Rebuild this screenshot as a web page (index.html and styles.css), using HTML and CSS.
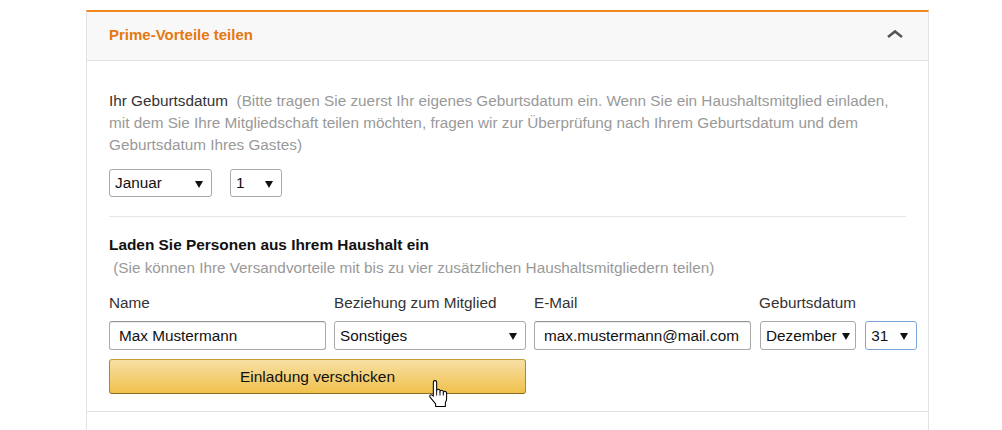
FILE: index.html
```html
<!DOCTYPE html>
<html>

<head>
    <link rel="stylesheet" href="styles.css">
</head>

<body>
    <div class="panel">
        <div class="panel-head">
            <span class="panel-title">Prime-Vorteile teilen</span>
            <svg class="chevron" width="18" height="10" viewBox="0 0 18 10">
                <path d="M2 8 L9 2.5 L16 8" fill="none" stroke="#555" stroke-width="2.6" />
            </svg>
        </div>
        <div class="panel-body">
            <p class="intro">
                <span class="intro-label">Ihr Geburtsdatum</span>&nbsp; (Bitte tragen Sie zuerst Ihr eigenes Geburtsdatum ein. Wenn Sie ein Haushaltsmitglied einladen, mit dem Sie Ihre Mitgliedschaft teilen möchten, fragen wir zur Überprüfung nach Ihrem Geburtsdatum und dem Geburtsdatum Ihres Gastes)
            </p>
            <div class="date-row">
                <div class="select w-month"><span>Januar</span></div>
                <div class="select w-day"><span>1</span></div>
            </div>
            <hr class="divider">
            <h3 class="invite-title">Laden Sie Personen aus Ihrem Haushalt ein</h3>
            <p class="invite-note">&nbsp;(Sie können Ihre Versandvorteile mit bis zu vier zusätzlichen Haushaltsmitgliedern teilen)</p>
            <div class="invite-grid">
                <label>Name</label>
                <label>Beziehung zum Mitglied</label>
                <label>E-Mail</label>
                <label>Geburtsdatum</label>

                <input class="field" type="text" value="Max Mustermann">
                <div class="select"><span>Sonstiges</span></div>
                <input class="field" type="text" value="max.mustermann@mail.com">
                <div class="date-pair">
                    <div class="select w-month2"><span>Dezember</span></div>
                    <div class="select w-day focused"><span>31</span></div>
                </div>

                <button class="send-btn">Einladung verschicken</button>
            </div>
            <svg class="cursor" width="20" height="28" viewBox="0 0 19 27">
                <path d="M5 2.2 a1.6 1.6 0 0 1 3.2 0 V10.5 a1.6 1.6 0 0 1 3.2 0 V11.5 a1.6 1.6 0 0 1 3.2 0 V12.5 a1.6 1.6 0 0 1 3.2 0 V18 c0 2 -1.2 3 -1.2 4.2 V25.5 H7.2 V23 L2 16.8 c-1.3 -1.6 0.4 -3.4 2 -2.2 L5 15.6 Z"
                    fill="#fff" stroke="#000" stroke-width="1" stroke-linejoin="round" />
                <path d="M8.2 10.5 V15 M11.4 11.5 V15 M14.6 12.5 V15" stroke="#000" stroke-width="0.9" />
            </svg>
        </div>
        <div class="panel-rest"></div>
    </div>
</body>

</html>
```

FILE: styles.css
```css
* {
    box-sizing: border-box;
}

body {
    margin: 0;
    background: #fff;
    font-family: "Liberation Sans", Arial, sans-serif;
    font-size: 15.3px;
    color: #333;
}

.panel {
    margin: 10px 0 0 86px;
    width: 843px;
    border-left: 1px solid #e3e3e3;
    border-right: 1px solid #e3e3e3;
    border-top: 2px solid #f08a1c;
}

.panel-head {
    height: 49px;
    background: #f8f8f8;
    border-bottom: 1px solid #e3e3e3;
    display: flex;
    align-items: center;
    justify-content: space-between;
    padding: 0 24px 0 22px;
}

.panel-title {
    color: #e47911;
    font-weight: bold;
    font-size: 15px;
    margin-top: -4px;
}

.chevron {
    margin-top: -4px;
}

.panel-body {
    position: relative;
    padding: 29px 22px 17px 22px;
    border-bottom: 1px solid #e3e3e3;
}

.intro {
    margin: 0;
    line-height: 22px;
    color: #999;
}

.intro-label {
    color: #333;
}

.date-row {
    display: flex;
    gap: 18px;
    margin-top: 13px;
}

.select {
    position: relative;
    height: 29px;
    border: 1px solid #a9a9a9;
    border-radius: 3px;
    background: #fff;
    display: flex;
    align-items: center;
    padding: 0 22px 0 5px;
    color: #111;
    overflow: hidden;
    white-space: nowrap;
}

.select span {
    overflow: hidden;
}

.select::after {
    content: "";
    position: absolute;
    right: 8px;
    top: 11px;
    border-left: 4px solid transparent;
    border-right: 4px solid transparent;
    border-top: 7px solid #111;
}

.date-row .select {
    height: 28px;
}

.w-month {
    width: 103px;
}

.w-day {
    width: 52px;
}

.w-month2 {
    width: 97px;
    padding-right: 14px;
}

.w-month2::after {
    right: 5px;
}

.focused {
    border-color: #7da7d9;
}

.divider {
    border: 0;
    border-top: 1px solid #e7e7e7;
    margin: 19px 0 0 0;
}

.invite-title {
    margin: 18px 0 0 0;
    font-size: 15.4px;
    line-height: 20px;
    color: #111;
}

.invite-note {
    margin: 3px 0 0 0;
    line-height: 20px;
    color: #999;
}

.invite-grid {
    display: grid;
    grid-template-columns: 217px 192px 217px 158px;
    column-gap: 8px;
    margin-top: 15px;
}

.invite-grid label {
    line-height: 20px;
    margin-bottom: 8px;
    color: #333;
}

.field {
    height: 29px;
    border: 1px solid #a9a9a9;
    border-top-color: #949494;
    border-radius: 3px;
    padding: 0 9px;
    font-family: inherit;
    font-size: 15.3px;
    color: #111;
    box-shadow: 0 1px 0 rgba(0, 0, 0, 0.07) inset;
}

.date-pair {
    display: flex;
    gap: 9px;
    margin-left: 1px;
}

.send-btn {
    grid-column: 1 / 3;
    margin-top: 9px;
    height: 35px;
    border: 1px solid;
    border-color: #c69b3a #a88734 #8a6d25;
    border-radius: 3px;
    background: linear-gradient(to bottom, #f7dfa5, #f0c14b);
    font-family: inherit;
    font-size: 15.5px;
    color: #111;
}

.cursor {
    position: absolute;
    left: 341px;
    top: 319px;
}

.panel-rest {
    height: 30px;
}
```
